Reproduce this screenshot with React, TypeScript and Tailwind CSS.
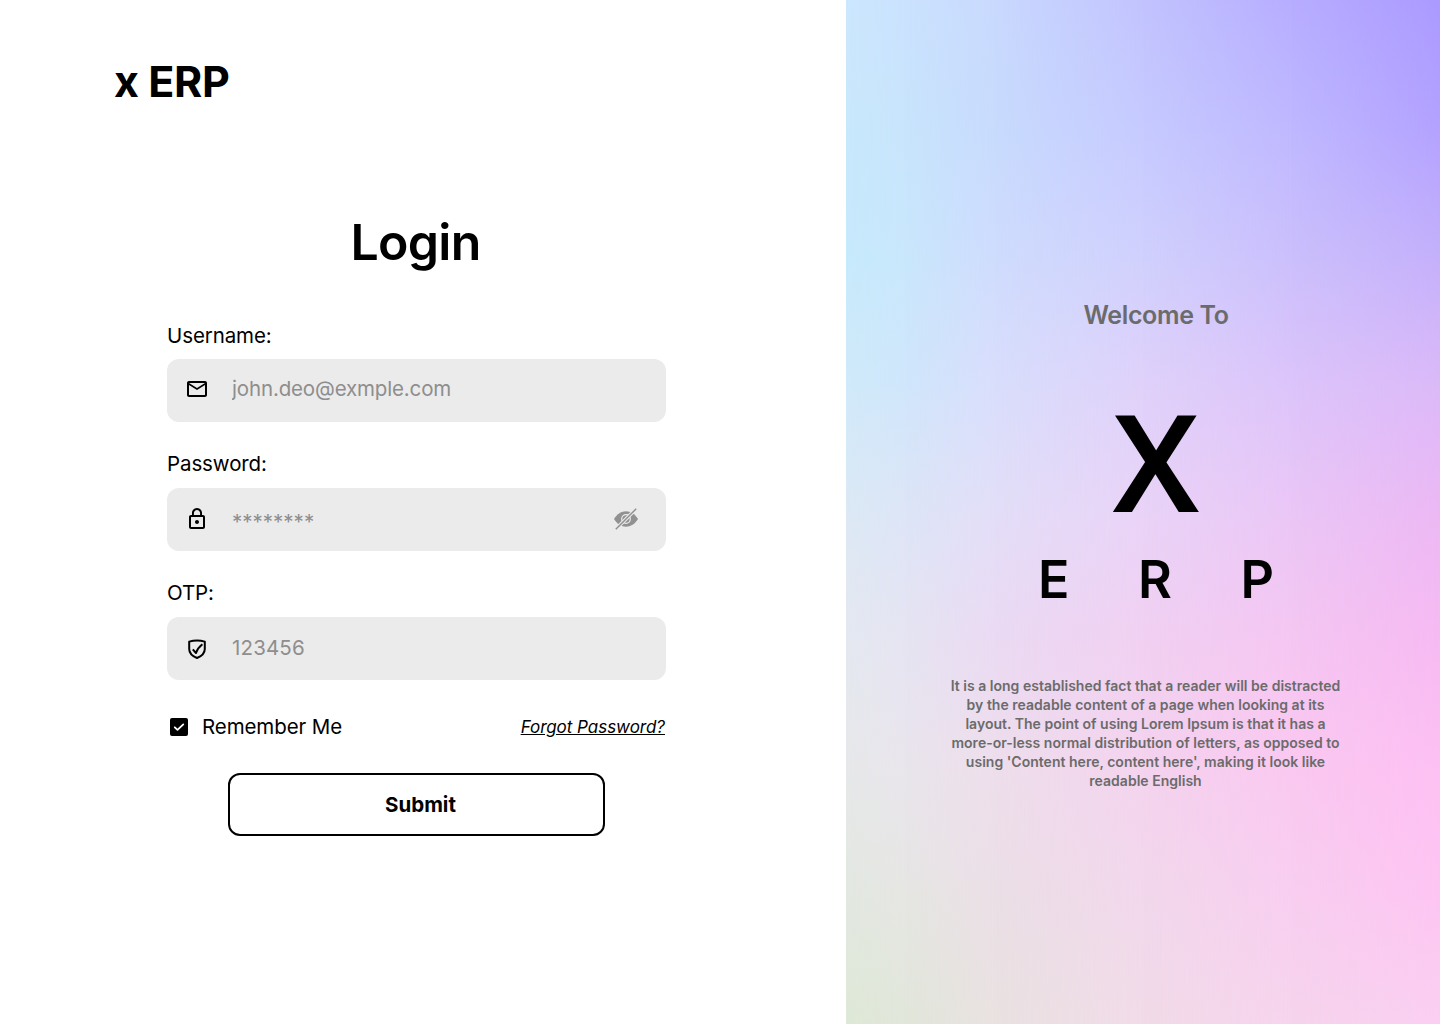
import React, { useState } from "react";
import { MdMailOutline, MdLockOutline } from "react-icons/md";

function ShieldIcon() {
  return (
    <svg className="size-6" viewBox="0 0 24 24" fill="none" stroke="#000" strokeWidth="2" strokeLinejoin="round">
      <path d="M4.2 4.6C9.5 3 14.500 3 19.800 4.600V12c0 4.400-3.300 7.200-7.800 9-4.500-1.800-7.800-4.600-7.800-9z" />
      <path d="M7.800 12.400l3.200 3.600c1-3 3.100-6.200 6.400-8.700" />
    </svg>
  );
}

function EyeOffIcon() {
  return (
    <svg className="h-6 w-[26px]" viewBox="0 0 26 24" fill="none">
      <path d="M1 12C4 7 8.500 4.300 13 4.300S22 7 25 12c-3 5-7.500 7.700-12 7.700S4 17 1 12z" fill="#919191" />
      <circle cx="13" cy="12" r="4.300" stroke="#ebebeb" strokeWidth="1.200" />
      <path d="M2.500 22.500L23.500 1.500" stroke="#ebebeb" strokeWidth="3.600" />
      <path d="M2.800 22.200L23.200 1.800" stroke="#919191" strokeWidth="1.500" />
    </svg>
  );
}

type FieldProps = {
  label: string;
  type: string;
  placeholder: string;
  icon: React.ReactNode;
  trailing?: React.ReactNode;
  labelClass: string;
  rowClass: string;
  inputClass: string;
};

function Field({ label, type, placeholder, icon, trailing, labelClass, rowClass, inputClass }: FieldProps) {
  return (
    <label className="block">
      <span className={`block text-[20.5px] leading-6 tracking-[-0.1px] ${labelClass}`}>{label}</span>
      <span className={`flex h-[63px] items-center rounded-xl bg-[#ebebeb] pl-[18px] pr-[27px] ${rowClass}`}>
        {icon}
        <input
          type={type}
          placeholder={placeholder}
          className={`ml-[23px] min-w-0 flex-1 bg-transparent text-[20.5px] leading-6 outline-none placeholder:text-[#8e8e8e] ${inputClass}`}
        />
        {trailing}
      </span>
    </label>
  );
}

function GradientBackdrop() {
  return (
    <div className="absolute inset-0">
      <div className="absolute inset-0 bg-[linear-gradient(to_bottom,#cce7fe_0%,#c8e8fc_12.5%,#c7eafc_25%,#d0eafa_37.5%,#dce9f5_50%,#e5e8f1_62.5%,#e7e8ea_75%,#e3e8e1_87.5%,#dee9d7_100%)]" />
      <div className="absolute inset-0 bg-[linear-gradient(to_bottom,#cbe2fe_0%,#c8e4fc_12.5%,#c9e7fc_25%,#d0e6fb_37.5%,#dde5f7_50%,#e6e4f2_62.5%,#e9e5ec_75%,#e6e6e3_87.5%,#e1e6da_100%)] [mask-image:linear-gradient(to_right,transparent_0%,black_10%)]" />
      <div className="absolute inset-0 bg-[linear-gradient(to_bottom,#c9d9fe_0%,#c8dbfd_12.5%,#cfdcfd_25%,#d9defc_37.5%,#e3def8_50%,#ebdaf3_62.5%,#eedeec_75%,#ebdfe6_87.5%,#e9e2e1_100%)] [mask-image:linear-gradient(to_right,transparent_10%,black_25%)]" />
      <div className="absolute inset-0 bg-[linear-gradient(to_bottom,#c2c3fe_0%,#c6caff_12.5%,#d0d0fd_25%,#dfd1fa_37.5%,#e9d3f7_50%,#f1d0f2_62.5%,#f4d3ee_75%,#f2d8ec_87.5%,#f1dbe8_100%)] [mask-image:linear-gradient(to_right,transparent_25%,black_50%)]" />
      <div className="absolute inset-0 bg-[linear-gradient(to_bottom,#b7adff_0%,#bfb8ff_12.5%,#cbbffc_25%,#dcc4fa_37.5%,#eac6f6_50%,#f5c6f2_62.5%,#fac8f0_75%,#f8cef0_87.5%,#f6d4ed_100%)] [mask-image:linear-gradient(to_right,transparent_50%,black_75%)]" />
      <div className="absolute inset-0 bg-[linear-gradient(to_bottom,#ab9aff_0%,#b3a2ff_12.5%,#c4b0fb_25%,#dbb9f8_37.5%,#ecb8f4_50%,#f6baf2_62.5%,#fdc0f2_75%,#fdc5f2_87.5%,#facff1_100%)] [mask-image:linear-gradient(to_right,transparent_75%,black_100%)]" />
    </div>
  );
}

export default function App() {
  const [remember, setRemember] = useState(true);
  return (
    <div className="flex h-[1024px] w-[1440px] overflow-hidden bg-white font-['Inter',sans-serif] text-black">
      <main className="w-[846px]">
        <header className="pl-[114px] pt-[55px] text-[43px] font-bold leading-[52px] tracking-[-0.4px]">x ERP</header>
        <form className="ml-[167px] w-[499px] pt-[105px]" onSubmit={(e) => e.preventDefault()}>
          <h1 className="h-[112px] pr-[2px] text-center text-[50px] font-semibold leading-[60px] tracking-[-0.7px]">Login</h1>
          <div className="flex flex-col gap-[30px]">
            <Field
              label="Username:"
              type="email"
              placeholder="john.deo@exmple.com"
              icon={<MdMailOutline className="size-6" />}
              labelClass="pb-[11px]"
              rowClass="pb-[3px]"
              inputClass="tracking-[-0.15px]"
            />
            <Field
              label="Password:"
              type="password"
              placeholder="********"
              icon={<MdLockOutline className="size-6" />}
              labelClass="pb-3"
              rowClass="pb-px"
              inputClass="pt-[6px]"
              trailing={
                <button type="button" aria-label="Show password">
                  <EyeOffIcon />
                </button>
              }
            />
            <Field
              label="OTP:"
              type="text"
              placeholder="123456"
              icon={<ShieldIcon />}
              labelClass="pb-3"
              rowClass="pt-px"
              inputClass="pb-[2px] tracking-[0.15px]"
            />
          </div>
          <div className="mt-8 flex h-[30px] items-center justify-between">
            <button
              type="button"
              role="checkbox"
              aria-checked={remember}
              onClick={() => setRemember(!remember)}
              className="flex items-center gap-[14px] pl-[3px] text-[20.5px] leading-6 tracking-[-0.1px]"
            >
              <svg className="size-[18px]" viewBox="0 0 18 18" fill="none">
                <rect width="18" height="18" rx="2" fill="#000" />
                {remember && (
                  <path d="M4.800 9.300l2.700 2.600 5.800-5.500" stroke="#fff" strokeWidth="1.800" strokeLinecap="round" strokeLinejoin="round" />
                )}
              </svg>
              Remember Me
            </button>
            <a href="#" className="mr-px text-[17px] italic leading-5 tracking-[-0.03px] underline">
              Forgot Password?
            </a>
          </div>
          <button className="ml-[61px] mt-[31px] h-[63px] w-[377px] rounded-xl border-2 border-black pl-2 pt-0.5 text-[20.5px] font-bold">
            Submit
          </button>
        </form>
      </main>
      <aside className="relative w-[594px]">
        <GradientBackdrop />
        <div className="relative flex flex-col items-center pt-[300px] text-center">
          <p className="ml-[26px] text-[25px] font-semibold leading-[30px] tracking-[-0.35px] text-[#6b6b6b]">Welcome To</p>
          <p className="ml-[26px] mt-[55px] font-['Open_Sans',sans-serif] text-[133px] font-semibold leading-[150px] [-webkit-text-stroke:2px_black]">
            X
          </p>
          <p className="ml-[26px] mt-[13px] flex h-[64px] w-[236px] justify-between text-[52px] font-semibold leading-[64px]">
            <span>E</span>
            <span>R</span>
            <span>P</span>
          </p>
          <p className="mt-[64px] w-[400px] pl-[5px] text-[14px] font-semibold leading-[19px] tracking-[0.02px] text-[#6b6b6b]">
            It is a long established fact that a reader will be distracted by the readable content of a page when looking
            at its layout. The point of using Lorem Ipsum is that it has a more-or-less normal distribution of letters, as
            opposed to using 'Content here, content here', making it look like readable English
          </p>
        </div>
      </aside>
    </div>
  );
}
